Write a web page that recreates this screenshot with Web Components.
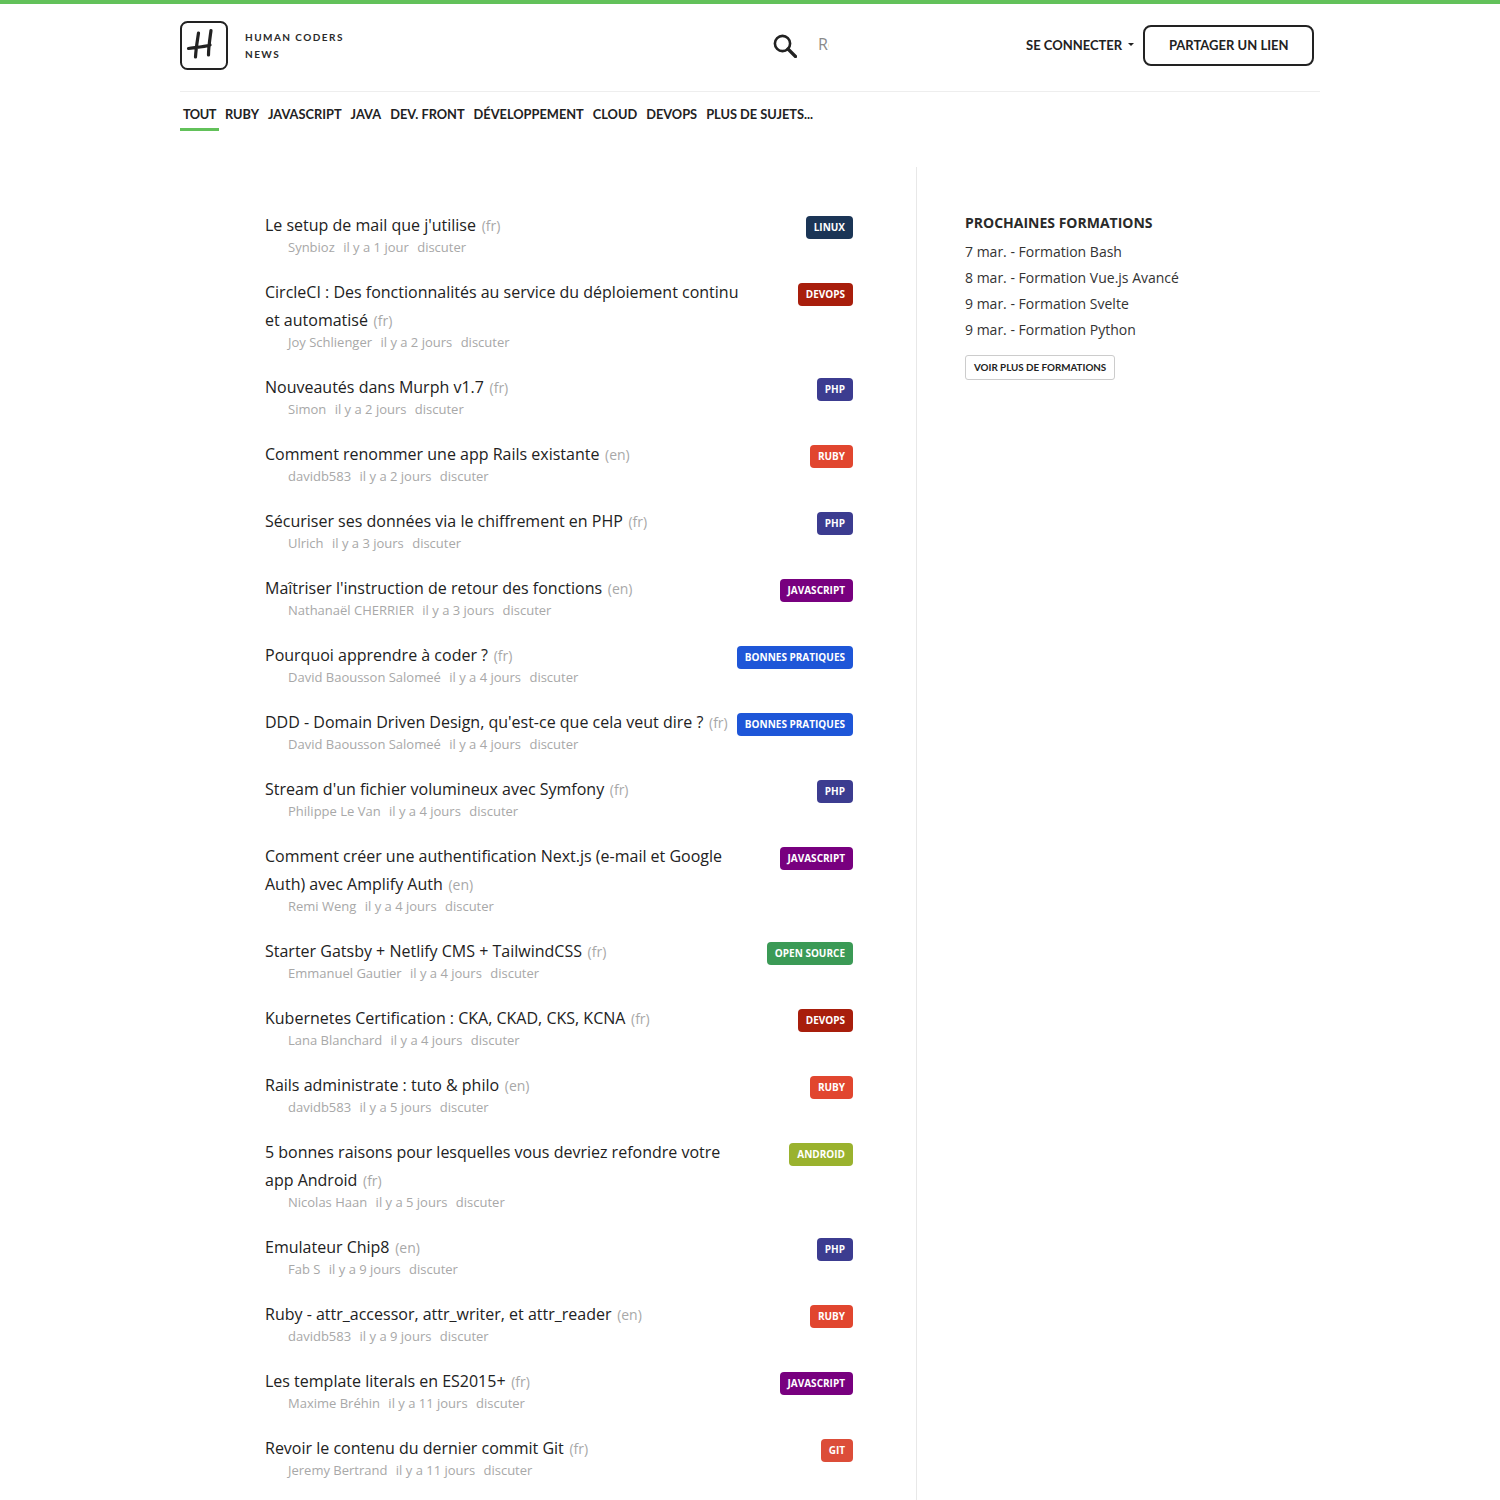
<!DOCTYPE html>
<html lang="fr">
<head>
<meta charset="utf-8">
<title>Human Coders News</title>
<style>
html, body { margin: 0; padding: 0; background: #fff; }
body { height: 1500px; overflow: hidden; font-family: "Open Sans", sans-serif; color: #222; }
</style>
</head>
<body>
<hc-header></hc-header>
<hc-layout>
  <hc-news-list id="news"></hc-news-list>
  <hc-sidebar slot="side"></hc-sidebar>
</hc-layout>

<script>
const tagColors = {
    'LINUX': '#1b3556',
    'DEVOPS': '#a81e0c',
    'PHP': '#3c3c90',
    'RUBY': '#e1462f',
    'JAVASCRIPT': '#78007f',
    'BONNES PRATIQUES': '#1e56d8',
    'OPEN SOURCE': '#3b9a56',
    'ANDROID': '#9ab22e',
    'GIT': '#dc4d39'
}

const news = [
    ['Le setup de mail que j\'utilise', 'fr', 'Synbioz', 'il y a 1 jour', 'LINUX'],
    ['CircleCI : Des fonctionnalités au service du déploiement continu et automatisé', 'fr', 'Joy Schlienger', 'il y a 2 jours', 'DEVOPS'],
    ['Nouveautés dans Murph v1.7', 'fr', 'Simon', 'il y a 2 jours', 'PHP'],
    ['Comment renommer une app Rails existante', 'en', 'davidb583', 'il y a 2 jours', 'RUBY'],
    ['Sécuriser ses données via le chiffrement en PHP', 'fr', 'Ulrich', 'il y a 3 jours', 'PHP'],
    ['Maîtriser l\'instruction de retour des fonctions', 'en', 'Nathanaël CHERRIER', 'il y a 3 jours', 'JAVASCRIPT'],
    ['Pourquoi apprendre à coder ?', 'fr', 'David Baousson Salomeé', 'il y a 4 jours', 'BONNES PRATIQUES'],
    ['DDD - Domain Driven Design, qu\'est-ce que cela veut dire ?', 'fr', 'David Baousson Salomeé', 'il y a 4 jours', 'BONNES PRATIQUES'],
    ['Stream d\'un fichier volumineux avec Symfony', 'fr', 'Philippe Le Van', 'il y a 4 jours', 'PHP'],
    ['Comment créer une authentification Next.js (e-mail et Google Auth) avec Amplify Auth', 'en', 'Remi Weng', 'il y a 4 jours', 'JAVASCRIPT'],
    ['Starter Gatsby + Netlify CMS + TailwindCSS', 'fr', 'Emmanuel Gautier', 'il y a 4 jours', 'OPEN SOURCE'],
    ['Kubernetes Certification : CKA, CKAD, CKS, KCNA', 'fr', 'Lana Blanchard', 'il y a 4 jours', 'DEVOPS'],
    ['Rails administrate : tuto & philo', 'en', 'davidb583', 'il y a 5 jours', 'RUBY'],
    ['5 bonnes raisons pour lesquelles vous devriez refondre votre app Android', 'fr', 'Nicolas Haan', 'il y a 5 jours', 'ANDROID'],
    ['Emulateur Chip8', 'en', 'Fab S', 'il y a 9 jours', 'PHP'],
    ['Ruby - attr_accessor, attr_writer, et attr_reader', 'en', 'davidb583', 'il y a 9 jours', 'RUBY'],
    ['Les template literals en ES2015+', 'fr', 'Maxime Bréhin', 'il y a 11 jours', 'JAVASCRIPT'],
    ['Revoir le contenu du dernier commit Git', 'fr', 'Jeremy Bertrand', 'il y a 11 jours', 'GIT']
]

class HcHeader extends HTMLElement {
    constructor() {
        super();
        this.attachShadow({mode: 'open'});
        this.shadowRoot.innerHTML = `
        <style>
        :host { display: block; border-top: 4px solid #62c15a; font-family: Lato, sans-serif; color: #222; }
        .wrap { width: 1140px; margin: 0 auto; }
        .top { display: flex; align-items: center; border-bottom: 1px solid #eee; box-sizing: border-box; height: 88px; }
        .top > * { flex: none; }
        .logo { display: block; margin-top: -4px; }
        .brand { margin-left: 17px; margin-top: -4px; font-size: 10px; font-weight: 700; letter-spacing: 1.45px; line-height: 17px; width: 110px; color: #2a2a2a; }
        .search { display: flex; align-items: center; margin-left: 418px; margin-top: -4px; }
        .search svg { display: block; }
        .search input { width: 11px; padding: 0; margin: -4px 0 0 21px; border: 0; outline: 0; font: 16px "Open Sans", sans-serif; background: transparent; }
        .search input::placeholder { color: #8a8a8a; opacity: 1; }
        .login { margin-left: 197px; margin-top: -6px; display: flex; align-items: center; font-size: 13px; font-weight: 700; color: #222; white-space: nowrap; }
        .caret { width: 0; height: 0; margin-left: 6px; border: 3.5px solid transparent; border-top-color: #222; border-bottom: 0; }
        .share { margin-left: 9px; margin-top: -4px; box-sizing: border-box; width: 171px; height: 41px; line-height: 37px; text-align: center; border: 2px solid #222; border-radius: 8px; font-size: 13px; font-weight: 700; white-space: nowrap; }
        nav { display: flex; height: 39px; font-size: 12.8px; font-weight: 700; color: #222; }
        nav a { padding: 0 3px; margin-right: 3px; line-height: 44px; box-sizing: border-box; height: 39px; white-space: nowrap; }
        nav a.on { border-bottom: 3px solid #62c15a; letter-spacing: -.5px; }
        </style>
        <div class="wrap">
            <div class="top">
                <svg class="logo" width="48" height="49" viewBox="0 0 48 49">
                    <rect x="1" y="1" width="46" height="47" rx="6.5" fill="none" stroke="#222" stroke-width="2"/>
                    <path d="M18.5 12 C17.5 19 16 27 15.5 36 M8.5 27.5 C15 26.5 24 26 30 24 M31 9.5 C30 17 28.5 26 28.5 34" fill="none" stroke="#222" stroke-width="3.2" stroke-linecap="round"/>
                </svg>
                <div class="brand">HUMAN CODERS NEWS</div>
                <div class="search">
                    <svg width="24" height="24" viewBox="0 0 24 24">
                        <circle cx="9.5" cy="9.5" r="7.6" fill="none" stroke="#222" stroke-width="2.6"/>
                        <path d="M15 15 L22.5 22.5" stroke="#222" stroke-width="3.2" stroke-linecap="round"/>
                    </svg>
                    <input placeholder="Rechercher">
                </div>
                <div class="login">SE CONNECTER<span class="caret"></span></div>
                <div class="share">PARTAGER UN LIEN</div>
            </div>
            <nav>
                <a class="on">TOUT</a><a>RUBY</a><a>JAVASCRIPT</a><a>JAVA</a><a>DEV. FRONT</a><a>DÉVELOPPEMENT</a><a>CLOUD</a><a>DEVOPS</a><a>PLUS DE SUJETS...</a>
            </nav>
        </div>`;
    }
}

class HcLayout extends HTMLElement {
    constructor() {
        super();
        this.attachShadow({mode: 'open'});
        this.shadowRoot.innerHTML = `
        <style>
        :host { display: block; }
        .wrap { width: 1140px; margin: 36px auto 0; display: flex; }
        .main { box-sizing: border-box; width: 737px; height: 1400px; border-right: 1px solid #e8e8e8; padding: 44px 63px 0 85px; }
        .side { flex: 1; padding: 46px 0 0 48px; }
        </style>
        <div class="wrap">
            <div class="main"><slot></slot></div>
            <div class="side"><slot name="side"></slot></div>
        </div>`;
    }
}

class HcNewsList extends HTMLElement {
    constructor() {
        super();
        this.attachShadow({mode: 'open'});
        this.shadowRoot.innerHTML = `<style>:host { display: block; }</style><slot></slot>`;
    }
    connectedCallback() {
        news.forEach(n => {
            const item = document.createElement('hc-news-item');
            item.setAttribute('lang', n[1]);
            item.setAttribute('author', n[2]);
            item.setAttribute('date', n[3]);
            item.setAttribute('tag', n[4]);
            item.textContent = n[0];
            this.appendChild(item);
        })
    }
}

class HcNewsItem extends HTMLElement {
    constructor() {
        super();
        this.attachShadow({mode: 'open'});
    }
    connectedCallback() {
        const tag = this.getAttribute('tag');
        this.shadowRoot.innerHTML = `
        <style>
        :host { display: flex; align-items: flex-start; justify-content: space-between; margin-bottom: 23px; }
        .body { flex: 0 1 480px; min-width: 0; }
        .title { font-size: 16px; line-height: 28px; color: #222; }
        .lang { font-size: 14px; line-height: 1; color: #a8a8a8; margin-left: 1.5px; }
        .meta { font-size: 13px; line-height: 16px; color: #a8a8a8; padding-left: 23px; }
        .meta span { margin-right: 5px; }
        .tag { flex: none; margin-top: 5px; box-sizing: border-box; height: 23px; line-height: 23px; padding: 0 8px; border-radius: 4px; font-size: 10px; font-weight: 700; color: #fff; white-space: nowrap; background: ${tagColors[tag]}; }
        </style>
        <div class="body">
            <div class="title"><slot></slot> <span class="lang">(${this.getAttribute('lang')})</span></div>
            <div class="meta"><span>${this.getAttribute('author')}</span> <span>${this.getAttribute('date')}</span> <span>discuter</span></div>
        </div>
        <div class="tag">${tag}</div>`;
    }
}

class HcSidebar extends HTMLElement {
    constructor() {
        super();
        this.attachShadow({mode: 'open'});
        this.shadowRoot.innerHTML = `
        <style>
        :host { display: block; color: #333; }
        h3 { margin: 0 0 6px; font-size: 14px; line-height: 20px; font-weight: 700; color: #2a2a2a; }
        div { font-size: 14px; line-height: 26px; }
        a { display: inline-block; margin-top: 12px; padding: 0 8px; height: 25px; line-height: 23px; box-sizing: border-box; border: 1px solid #ccc; border-radius: 3px; font-family: Lato, sans-serif; font-size: 9.8px; font-weight: 700; color: #222; }
        </style>
        <h3>PROCHAINES FORMATIONS</h3>
        <div>7 mar. - Formation Bash</div>
        <div>8 mar. - Formation Vue.js Avancé</div>
        <div>9 mar. - Formation Svelte</div>
        <div>9 mar. - Formation Python</div>
        <a>VOIR PLUS DE FORMATIONS</a>`;
    }
}

window.customElements.define('hc-header', HcHeader)
window.customElements.define('hc-layout', HcLayout)
window.customElements.define('hc-news-item', HcNewsItem)
window.customElements.define('hc-news-list', HcNewsList)
window.customElements.define('hc-sidebar', HcSidebar)
</script>
</body>
</html>
